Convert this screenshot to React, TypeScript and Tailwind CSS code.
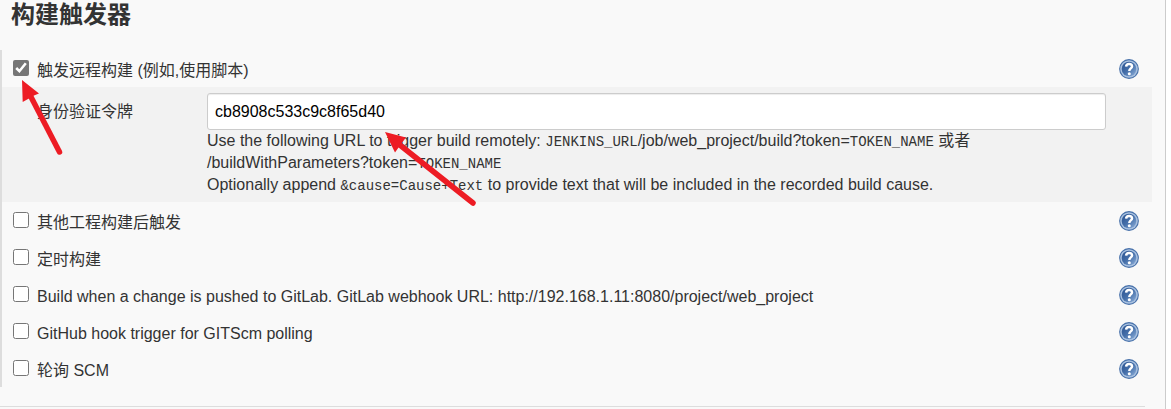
interface Trigger {
  id: string;
  label: string;
}

const triggers: Trigger[] = [
  { id: 'upstream', label: '其他工程构建后触发' },
  { id: 'timer', label: '定时构建' },
  { id: 'gitlab', label: 'Build when a change is pushed to GitLab. GitLab webhook URL: http://192.168.1.11:8080/project/web_project' },
  { id: 'github', label: 'GitHub hook trigger for GITScm polling' },
  { id: 'scm', label: '轮询 SCM' },
];

function HelpButton({ label }: { label: string }) {
  return (
    <button type="button" aria-label={`Help: ${label}`} className="mr-[13px] shrink-0">
      <svg viewBox="0 0 20 20" className="block h-5 w-5">
        <defs>
          <linearGradient id="help-fill" x1="0" y1="0" x2="1" y2="1">
            <stop offset="0" stopColor="#27508f" />
            <stop offset="0.5" stopColor="#4670aa" />
            <stop offset="1" stopColor="#8fb0da" />
          </linearGradient>
        </defs>
        <circle cx="10" cy="10" r="9.9" fill="#456fa9" />
        <circle cx="10" cy="10" r="8.8" fill="#a9c1e0" />
        <circle cx="10" cy="10" r="7.3" fill="url(#help-fill)" />
        <path d="M7.1 7.6C7.3 4 13.2 4.1 13 7.5C12.9 9.5 10.3 9.4 10.3 12" fill="none" stroke="#fff" strokeWidth="2.5" />
        <circle cx="10.3" cy="14.7" r="1.5" fill="#fff" />
      </svg>
    </button>
  );
}

function TriggerRow({ id, label, checked = false }: Trigger & { checked?: boolean }) {
  return (
    <div className="flex min-h-[37px] items-center">
      <input id={id} type="checkbox" defaultChecked={checked} className="mr-2 mb-px ml-[11px] h-4 w-4 shrink-0 accent-[#767676]" />
      <label htmlFor={id} className="grow pt-1">{label}</label>
      <HelpButton label={label} />
    </div>
  );
}

function Code({ children }: { children: string }) {
  return <code className="font-['Liberation_Mono',monospace] text-sm leading-none">{children}</code>;
}

export default function App() {
  return (
    <div className="bg-white pr-[5px] font-['Liberation_Sans','Noto_Sans_CJK_SC',sans-serif] text-base leading-[22px] text-[#333]">
      <main className="relative min-h-screen border-r border-[#ccc] bg-[#f9f9f9]">
        <h2 className="mb-5 pl-[11px] text-2xl leading-[30px] font-bold">构建触发器</h2>

        <section className="mr-[13px] border-l-2 border-[#ddd]">
          <TriggerRow id="remote" label="触发远程构建 (例如,使用脚本)" checked />

          <div className="flex bg-[#f2f2f2] py-[6px] pr-[46px]">
            <label htmlFor="token" className="w-[205px] shrink-0 pt-2 pl-[35px]">身份验证令牌</label>
            <div className="grow">
              <input
                id="token"
                type="text"
                defaultValue="cb8908c533c9c8f65d40"
                className="block h-[37px] w-full rounded-[3px] border border-[#ccc] bg-white px-[7px] text-black shadow-[inset_0_1px_1px_rgba(0,0,0,0.075)]"
              />
              <p>
                Use the following URL to trigger build remotely: <Code>JENKINS_URL</Code>/job/web_project/build?token=<Code>TOKEN_NAME</Code> 或者
                <br />
                /buildWithParameters?token=<Code>TOKEN_NAME</Code>
                <br />
                Optionally append <Code>&cause=Cause+Text</Code> to provide text that will be included in the recorded build cause.
              </p>
            </div>
          </div>

          {triggers.map((trigger) => (
            <TriggerRow key={trigger.id} {...trigger} />
          ))}
        </section>

        <hr className="mt-[19px] mr-5 border-[#ddd]" />

        {/* Arrows pointing at the checkbox and the token */}
        <svg className="pointer-events-none absolute top-0 left-0 h-[220px] w-[500px]" viewBox="0 0 500 220" fill="#ed1c24">
          <path d="M22 80L39 93.5L34 95.5L28 99L22.7 102Z" />
          <path d="M30 95L59.5 152" stroke="#ed1c24" strokeWidth="5.5" strokeLinecap="round" />
          <path d="M385 132L406 137.5L401 144L395 152.5Z" />
          <path d="M398 143.5L473 203" stroke="#ed1c24" strokeWidth="5.5" strokeLinecap="round" />
        </svg>
      </main>
    </div>
  );
}
